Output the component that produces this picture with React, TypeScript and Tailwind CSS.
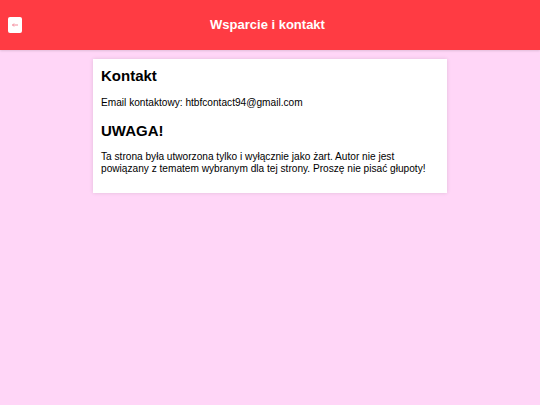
export default function App() {
  return (
    <div className="min-h-[405px] bg-[#ffd6f7]" style={{ fontFamily: '"Liberation Sans", Arial, sans-serif' }}>
      <header className="relative flex h-[50px] items-center justify-center bg-[#ff3b43] pr-[5px] shadow-[0_1px_2px_rgba(0,0,0,0.12)]">
        <button className="absolute left-[8px] top-[17px] flex h-[16px] w-[14px] items-center justify-center rounded-[2px] bg-white">
          <svg width="6" height="4" viewBox="0 0 6 4" fill="none">
            <path d="M0.5 2H6M2 0.5L0.5 2L2 3.5" stroke="#f48a9a" strokeWidth="1" />
          </svg>
        </button>
        <h1 className="text-[13px] font-bold leading-[16px] text-white">Wsparcie i kontakt</h1>
      </header>
      <main className="flex justify-center pt-[9px]">
        <section className="w-[354px] bg-white px-[8px] pb-[18px] pt-[8px] text-black shadow-[0_0_4px_rgba(0,0,0,0.12)]">
          <h2 className="text-[15px] font-bold leading-[18px]">Kontakt</h2>
          <p className="mt-[12px] text-[10.15px] leading-[12px]">Email kontaktowy: htbfcontact94@gmail.com</p>
          <h2 className="mt-[13px] text-[15px] font-bold leading-[18px]">UWAGA!</h2>
          <p className="mt-[11px] text-[10.15px] leading-[12px]">
            Ta strona była utworzona tylko i wyłącznie jako żart. Autor nie jest powiązany z tematem wybranym dla tej strony. Proszę nie pisać głupoty!
          </p>
        </section>
      </main>
    </div>
  );
}
